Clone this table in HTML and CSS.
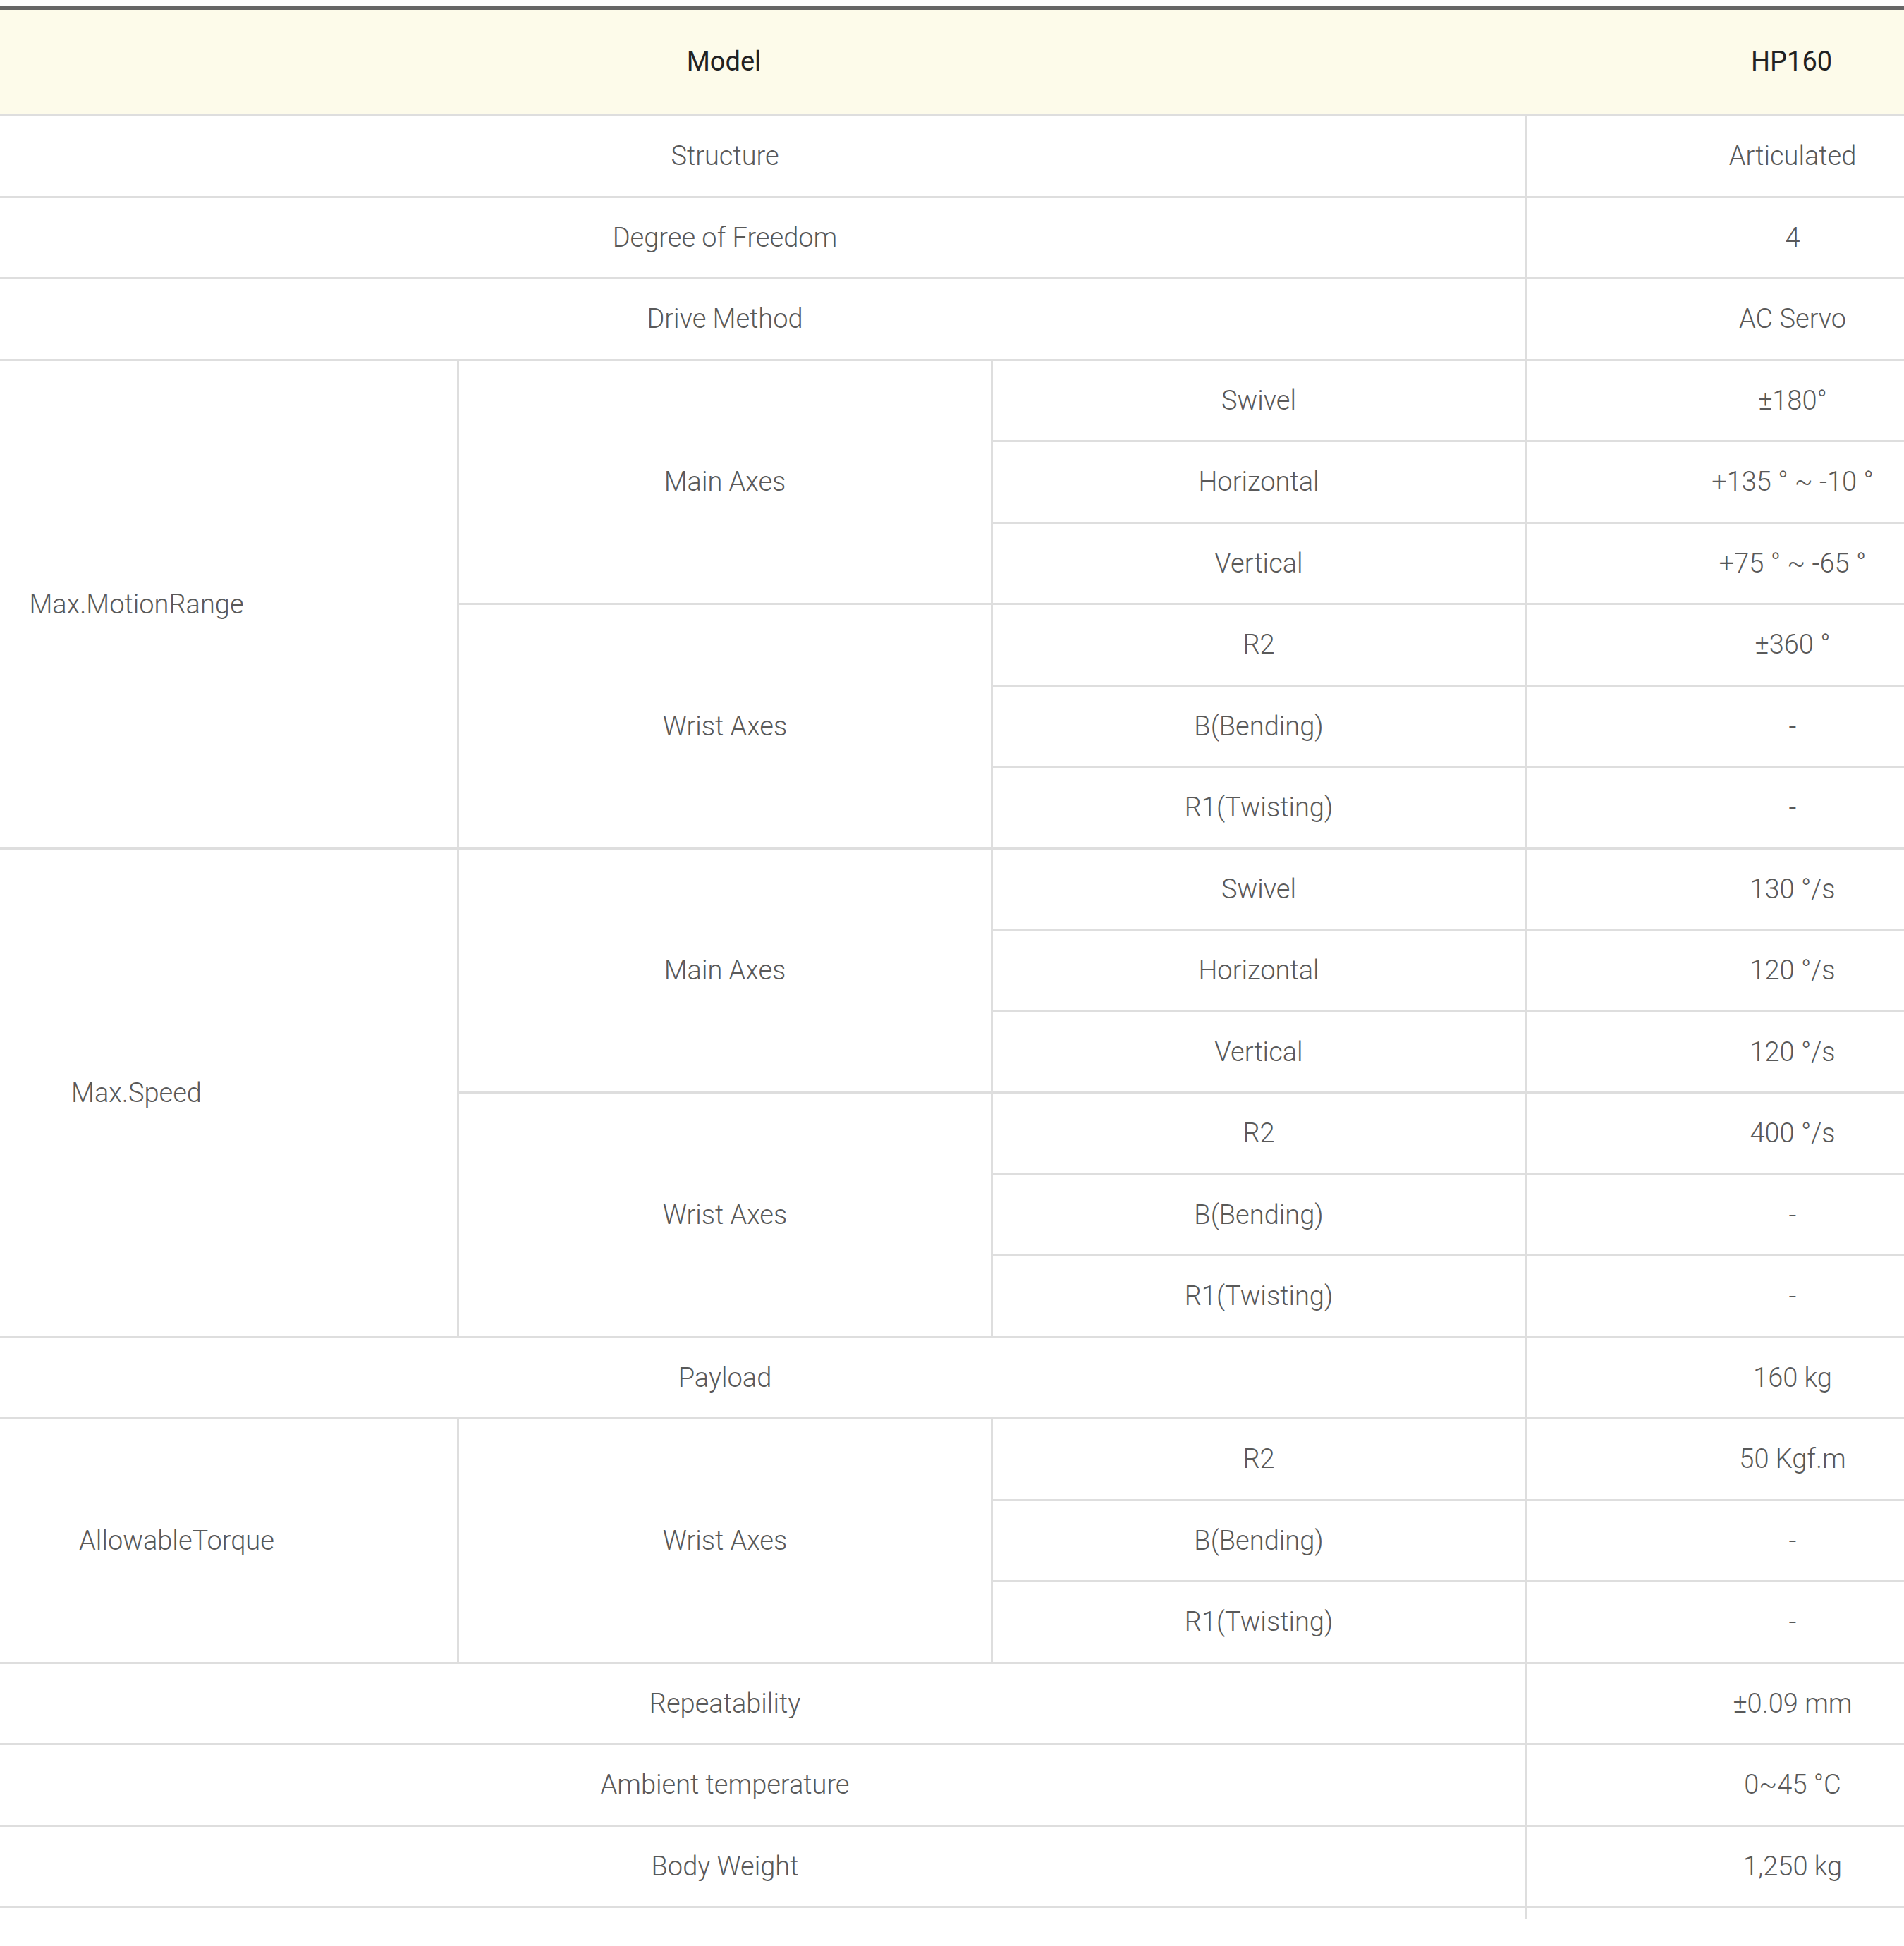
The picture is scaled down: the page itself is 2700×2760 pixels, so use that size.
FILE: index.html
```html
<!DOCTYPE html>
<html lang="en">
<head>
<meta charset="utf-8">
<title>HP160 Specification</title>
<link rel="stylesheet" href="styles.css">
</head>
<body>
<div class="page">
  <div class="frame">
    <table class="spec">
      <colgroup>
        <col class="col">
        <col class="col">
        <col class="col">
        <col class="col">
      </colgroup>
      <thead>
        <tr class="head-row">
          <th colspan="3">Model</th>
          <th>HP160</th>
        </tr>
      </thead>
      <tbody>
        <tr><td colspan="3">Structure</td><td>Articulated</td></tr>
        <tr><td colspan="3">Degree of Freedom</td><td>4</td></tr>
        <tr><td colspan="3">Drive Method</td><td>AC Servo</td></tr>

        <tr><td rowspan="6" class="group">Max.MotionRange</td><td rowspan="3">Main Axes</td><td>Swivel</td><td>±180°</td></tr>
        <tr><td>Horizontal</td><td>+135 ° ~ -10 °</td></tr>
        <tr><td>Vertical</td><td>+75 ° ~ -65 °</td></tr>
        <tr><td rowspan="3">Wrist Axes</td><td>R2</td><td>±360 °</td></tr>
        <tr><td>B(Bending)</td><td>-</td></tr>
        <tr><td>R1(Twisting)</td><td>-</td></tr>

        <tr><td rowspan="6" class="group">Max.Speed</td><td rowspan="3">Main Axes</td><td>Swivel</td><td>130 °/s</td></tr>
        <tr><td>Horizontal</td><td>120 °/s</td></tr>
        <tr><td>Vertical</td><td>120 °/s</td></tr>
        <tr><td rowspan="3">Wrist Axes</td><td>R2</td><td>400 °/s</td></tr>
        <tr><td>B(Bending)</td><td>-</td></tr>
        <tr><td>R1(Twisting)</td><td>-</td></tr>

        <tr><td colspan="3">Payload</td><td>160 kg</td></tr>

        <tr><td rowspan="3" class="group group-torque">AllowableTorque</td><td rowspan="3">Wrist Axes</td><td>R2</td><td>50 Kgf.m</td></tr>
        <tr><td>B(Bending)</td><td>-</td></tr>
        <tr><td>R1(Twisting)</td><td>-</td></tr>

        <tr><td colspan="3">Repeatability</td><td>±0.09 mm</td></tr>
        <tr><td colspan="3">Ambient temperature</td><td>0~45 °C</td></tr>
        <tr><td colspan="3">Body Weight</td><td>1,250 kg</td></tr>
        <tr><td colspan="3"></td><td></td></tr>
      </tbody>
    </table>
  </div>
</div>
</body>
</html>
```

FILE: styles.css
```css
html,
body {
  margin: 0;
  padding: 0;
  background: #ffffff;
  overflow: hidden;
}

.page {
  padding-top: 8px;
}

.frame {
  height: 2713px;
  overflow: hidden;
}

.spec {
  border-collapse: separate;
  border-spacing: 0;
  table-layout: fixed;
  width: 3028px;
  margin-left: -109px;
  border-top: 6px solid #666666;
  font-family: Roboto, "Liberation Sans", sans-serif;
  font-size: 38px;
}

.col {
  width: 757px;
}

.head-row {
  height: 151px;
}

.spec th {
  background: #fdfbea;
  padding: 0 0 3px 0;
  font-weight: 400;
  color: #222222;
  text-align: center;
  vertical-align: middle;
  border-bottom: 3px solid #dedede;
}

.spec tbody tr {
  height: 115.5px;
}

.spec td {
  padding: 0;
  font-weight: 300;
  color: #595959;
  text-align: center;
  vertical-align: middle;
  border-left: 3px solid #dedede;
  border-bottom: 3px solid #dedede;
  white-space: nowrap;
}

.spec td.group {
  padding-right: 155px;
}

.spec td.group-torque {
  padding-right: 41px;
}
```
